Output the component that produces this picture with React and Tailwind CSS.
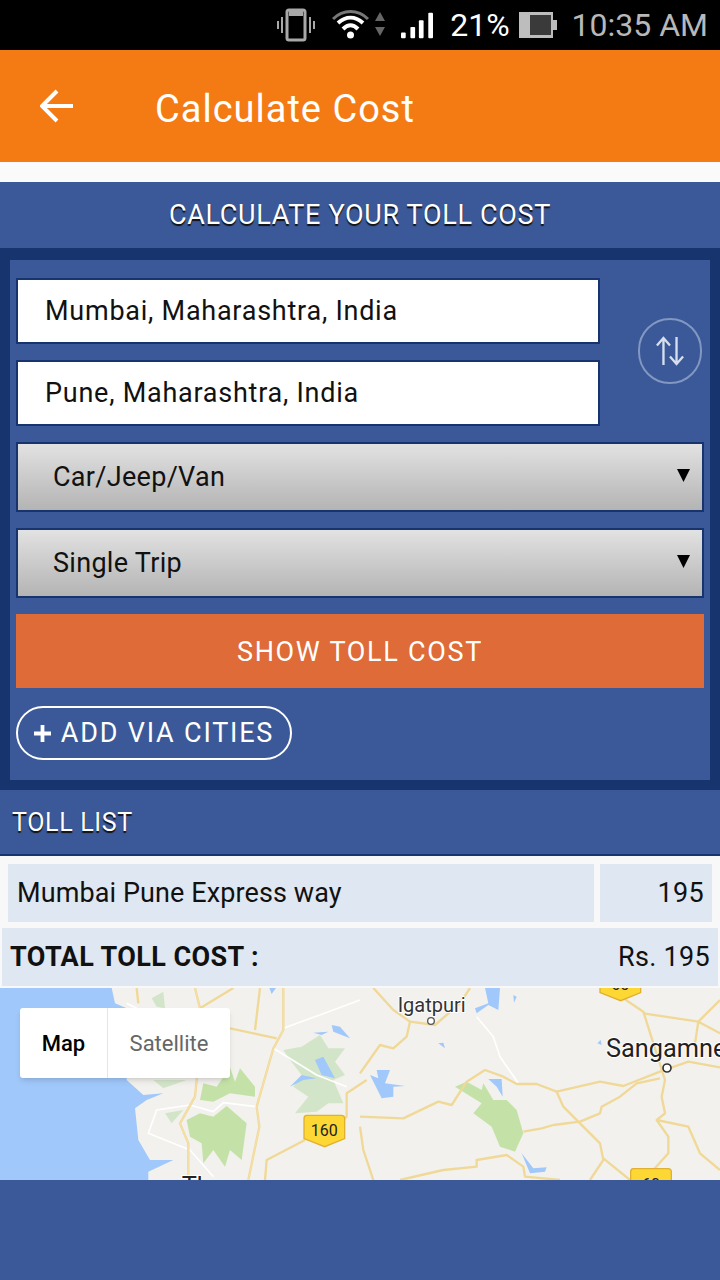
const ROADS_LEFT = [
  'M585 24 L600 85 L590 300 L585 350 L540 430 L565 490 L565 600',
  'M850 24 L850 150 L820 205 L770 380 L778 440 L745 600',
  'M410 24 L415 70',
  'M600 85 L700 24',
  'M780 24 L765 150',
  'M690 145 L830 175',
  'M1100 300 L1040 340 L1040 410 L1030 420',
  'M915 480 L800 540 L795 600',
];

const ROADS_RIGHT = [
  'M40 24 L100 90 L150 125 L225 135 L300 70 L330 24',
  'M150 125 L140 170 L100 205 L60 195 L0 280',
  'M0 410 L130 415 L235 365 L275 375 L320 305 L375 270 L430 290 L470 312 L530 312 L590 335 L720 305 L790 318 L900 275 L985 245 L1080 262',
  'M590 335 L610 380 L660 430 L720 490 L730 540 L690 600',
  'M490 455 L545 445 L580 435 L660 425 L720 400 L725 380 L780 350 L830 310 L900 295',
  'M790 55 L850 95 L915 300 L905 350 L915 400 L890 420 L925 470 L925 520 L880 570',
  'M850 100 L1015 125 L1080 60',
  'M1015 125 L1005 190',
  'M890 420 L985 440 L1020 520 L1080 570',
  'M120 600 L250 570 L350 560 L350 540 L440 525 L490 560 L495 590 L600 600',
  'M730 535 L810 600',
  'M1015 125 L1080 160',
  'M0 440 L10 510 L40 600',
];

const ShieldBadge = ({ x, y, label }) => (
  <g>
    <path
      d={`M${x + 8} ${y} H${x + 112} Q${x + 122} ${y} ${x + 122} ${y + 10} V${y + 70} L${x + 62} ${y + 94} L${x} ${y + 70} V${y + 10} Q${x} ${y} ${x + 8} ${y}Z`}
      fill="#fdd835"
      stroke="#e0b030"
      strokeWidth="4"
    />
    <text x={x + 61} y={y + 63} textAnchor="middle" fontSize="48" fontFamily="Roboto, sans-serif" fill="#222">
      {label}
    </text>
  </g>
);

const MapDrawing = () => (
  <svg viewBox="0 24 2160 576" className="block w-[720px] h-[192px]">
    <rect x="0" y="24" width="2160" height="576" fill="#f2f1ed" />
    <path d="M0 24 L335 24 L345 70 L380 85 L380 300 L430 345 L490 340 L440 360 L405 385 L415 480 L450 540 L520 540 L445 575 L445 600 L0 600Z" fill="#a0c8fa" />

    {/* parks */}
    <g fill="#d3e5c9">
      <path d="M850 210 L905 200 L960 165 L985 205 L1035 205 L1005 245 L1035 285 L1000 300 L1030 370 L985 370 L950 395 L885 400 L925 350 L880 320 L905 285 L870 240Z" />
      <path d="M455 55 L490 35 L495 85 L470 80Z" />
      <path d="M495 400 L550 390 L515 430Z" />
      <path d="M460 300 L560 300 L490 325Z" />
    </g>
    <g fill="#c4e2a8">
      <path d="M610 310 L650 320 L690 262 L705 305 L720 265 L765 320 L765 350 L690 340 L640 365 L600 360Z" />
      <path d="M560 420 L600 400 L640 410 L680 378 L740 430 L725 540 L690 510 L675 560 L640 510 L610 550 L605 490 L570 470Z" />
      <path d="M1365 320 L1400 305 L1445 330 L1450 310 L1480 360 L1520 360 L1550 390 L1570 460 L1545 515 L1500 500 L1475 440 L1420 400 L1445 370Z" />
    </g>

    {/* water */}
    <g fill="#a0c8fa">
      <path d="M945 240 L970 230 L1005 295 L965 285Z" />
      <path d="M995 135 L1020 140 L1050 175 L1000 155Z" />
      <path d="M940 158 L985 155 L965 165Z" />
      <path d="M870 320 L905 285 L950 295 L910 300Z" />
      <path d="M808 24 L828 24 L815 42Z" />
      <path d="M1110 285 L1135 295 L1130 270 L1170 270 L1155 310 L1215 318 L1180 320 L1180 350 L1145 355Z" />
      <path d="M1465 297 L1505 297 L1508 350 L1490 320Z" />
      <path d="M1565 520 L1600 565 L1640 562 L1635 575 L1590 580Z" />
      <path d="M1455 24 L1500 24 L1495 90 L1465 75 L1430 100 L1425 85 L1465 70Z" />
      <path d="M1540 45 L1550 50 L1542 68Z" />
      <path d="M1315 190 L1330 188 L1335 205Z" />
      <path d="M1792 190 L1802 180 L1805 195Z" />
    </g>

    {/* white roads */}
    <g fill="none" stroke="#ffffff" strokeWidth="5" strokeLinejoin="round">
      <path d="M850 145 L1000 90 L1080 60" />
      <path d="M820 205 L950 285 L1040 320" />
      <path d="M570 375 L640 395 L670 368 L770 380" />
      <path d="M570 375 L470 390 L445 460 L570 510 L640 590" />
      <path d="M380 70 L420 90" />
      <path d="M1430 110 L1480 170 L1500 230 L1555 310" />
    </g>

    {/* yellow roads */}
    <g fill="none" stroke="#f0d897" strokeWidth="7" strokeLinejoin="round">
      {ROADS_LEFT.map((d) => (
        <path key={d} d={d} />
      ))}
      <g transform="translate(1080 0)">
        {ROADS_RIGHT.map((d) => (
          <path key={d} d={d} />
        ))}
      </g>
    </g>
    <g fill="none" stroke="#f8e6b4" strokeWidth="2" strokeLinejoin="round">
      {ROADS_LEFT.slice(0, 2).map((d) => (
        <path key={d} d={d} />
      ))}
    </g>

    <ShieldBadge x={912} y={406} label="160" />
    <ShieldBadge x={1800} y={-32} label="60" />
    <ShieldBadge x={1892} y={566} label="60" />

    <circle cx="1293" cy="123" r="10" fill="#fff" stroke="#555" strokeWidth="4" />
    <circle cx="2001" cy="264" r="12" fill="#fff" stroke="#333" strokeWidth="5" />

    <g fontFamily="Roboto, sans-serif" fill="#333" stroke="#fff" strokeWidth="6" paintOrder="stroke">
      <text x="1193" y="96" fontSize="60">Igatpuri</text>
      <text x="1818" y="232" fontSize="76" fill="#222">Sangamner</text>
      <text x="545" y="645" fontSize="76" fill="#222">Thane</text>
    </g>
  </svg>
);

const StatusBar = () => (
  <div className="flex h-[50px] items-center justify-end bg-black pr-[12px] font-['Roboto',sans-serif]">
    {/* vibrate */}
    <svg width="38" height="34" viewBox="0 0 38 34" className="mr-[17px]" fill="none" stroke="#a8a8a8">
      <rect x="10" y="2" width="18" height="30" rx="2" strokeWidth="3" />
      <rect x="12" y="3" width="14" height="5" fill="#a8a8a8" stroke="none" />
      <path d="M5 9V25M1 13V21M33 9V25M37 13V21" strokeWidth="2" />
    </svg>
    {/* wifi */}
    <svg width="54" height="34" viewBox="0 0 54 34" className="mr-[15px]" fill="none">
      <path d="M1 11C11 1 26 1 36 11" stroke="#777" strokeWidth="3" />
      <path d="M6 15C14 8 23 8 31 15" stroke="#fff" strokeWidth="4" />
      <path d="M11 21C16 16 21 16 26 21" stroke="#fff" strokeWidth="4" />
      <circle cx="18.5" cy="27" r="3.5" fill="#fff" />
      <path d="M48 4L53 13H43Z M43 19H53L48 28Z" fill="#666" />
    </svg>
    {/* signal */}
    <svg width="32" height="30" viewBox="0 0 34 30" className="mr-[17px]" fill="#fff">
      <rect x="0" y="23" width="5" height="6" rx="1" />
      <rect x="10" y="17" width="5" height="12" rx="1" />
      <rect x="19" y="10" width="5" height="19" rx="1" />
      <rect x="29" y="2" width="5" height="27" rx="1" />
    </svg>
    <span className="mr-[9px] text-[32px] leading-none text-white">21%</span>
    {/* battery */}
    <svg width="38" height="26" viewBox="0 0 38 26" className="mr-[15px]">
      <rect x="0" y="0" width="34" height="26" fill="#bdbdbd" />
      <rect x="11" y="3" width="21" height="20" fill="#3a3a3a" />
      <rect x="34" y="8" width="4" height="10" fill="#bdbdbd" />
    </svg>
    <span className="text-[32px] leading-none text-[#b8b8b8]">10:35 AM</span>
  </div>
);

const FieldInput = ({ value }) => (
  <div className="flex h-[66px] w-[584px] items-center border-2 border-[#17346f] bg-white pl-[27px] text-[27px] tracking-[0.75px] text-[#111]">
    {value}
  </div>
);

const FieldSelect = ({ value }) => (
  <div className="relative flex h-[70px] items-center border-2 border-[#17346f] bg-gradient-to-b from-[#e2e2e2] to-[#b4b4b4] pl-[35px] text-[27px] tracking-[0.3px] text-[#111]">
    {value}
    <svg width="13" height="13" viewBox="0 0 13 13" className="absolute right-[12px] top-[25px]">
      <path d="M0 0H13L6.5 13Z" fill="#000" />
    </svg>
  </div>
);

const App = () => {
  return (
    <div className="flex h-[1280px] w-[720px] flex-col overflow-hidden bg-[#3b5998] font-['Roboto',sans-serif]">
      <StatusBar />

      <header className="flex h-[112px] items-center bg-[#f47b14] pl-[40px] text-white">
        <svg width="34" height="34" viewBox="0 0 34 34" fill="none" stroke="#fff" strokeWidth="4">
          <path d="M33 17H3M17 2L2 17L17 32" />
        </svg>
        <h1 className="ml-[81px] pt-[5px] text-[38px] leading-none tracking-[1px]">Calculate Cost</h1>
      </header>

      <div className="h-[20px] bg-[#fafafa]" />

      <div className="flex h-[66px] items-center justify-center text-[27px] tracking-[0.67px] text-white [text-shadow:0_2px_1px_#111]">
        CALCULATE YOUR TOLL COST
      </div>

      <section className="mx-0 border-x-[10px] border-t-[12px] border-b-[10px] border-[#17346f] px-[6px] pt-[18px] pb-[20px]">
        <div className="flex items-center justify-between">
          <div className="flex flex-col gap-[16px]">
            <FieldInput value="Mumbai, Maharashtra, India" />
            <FieldInput value="Pune, Maharashtra, India" />
          </div>
          <div className="mr-[2px] -mt-[2px] flex h-[66px] w-[64px] items-center justify-center rounded-full border-2 border-[#8298c2] text-white">
            <svg width="28" height="30" viewBox="0 0 30 32" fill="none" stroke="#d5dfee" strokeWidth="2.5">
              <path d="M8 31V3M1 10L8 2L15 10M22 1V29M15 22L22 30L29 22" />
            </svg>
          </div>
        </div>
        <div className="mt-[16px] flex flex-col gap-[16px]">
          <FieldSelect value="Car/Jeep/Van" />
          <FieldSelect value="Single Trip" />
        </div>
        <button className="mt-[16px] flex h-[74px] w-full items-center justify-center bg-[#de6b38] pt-[3px] text-[27px] tracking-[1.7px] text-white">
          SHOW TOLL COST
        </button>
        <button className="mt-[18px] flex h-[54px] w-[276px] items-center justify-center gap-[10px] rounded-full border-2 border-white text-[27px] tracking-[1.8px] text-white">
          <svg width="17" height="17" viewBox="0 0 18 18" fill="#fff">
            <path d="M7 0H11V7H18V11H11V18H7V11H0V7H7Z" />
          </svg>
          ADD VIA CITIES
        </button>
      </section>

      <div className="flex h-[66px] items-center border-b-2 border-[#17346f] pl-[12px] pt-[2px] text-[25px] tracking-[0.66px] text-white [text-shadow:0_2px_1px_#111]">
        TOLL LIST
      </div>

      <div className="bg-[#f8f8f8] pt-[8px] pb-[2px] text-[#111]">
        <div className="flex gap-[6px] px-[8px]">
          <div className="flex h-[58px] flex-1 items-center bg-[#dfe7f2] pl-[9px] text-[27px] tracking-[0.1px]">Mumbai Pune Express way</div>
          <div className="flex h-[58px] w-[112px] items-center justify-end bg-[#dfe7f2] pr-[8px] text-[27px] tracking-[0.3px]">195</div>
        </div>
        <div className="mx-[2px] mt-[6px] flex h-[58px] items-center justify-between bg-[#dfe7f2] px-[8px] text-[27px]">
          <span className="font-bold tracking-[0.4px]">TOTAL TOLL COST :</span>
          <span className="tracking-[0.3px]">Rs. 195</span>
        </div>
      </div>

      <div className="relative h-[192px] overflow-hidden">
        <MapDrawing />
        <div className="absolute left-[20px] top-[20px] flex h-[70px] w-[210px] items-center rounded-[3px] bg-white text-[22px] shadow-md">
          <div className="flex h-full w-[88px] items-center justify-center border-r border-[#e6e6e6] font-medium text-black">Map</div>
          <div className="flex h-full flex-1 items-center justify-center text-[#666]">Satellite</div>
        </div>
      </div>
    </div>
  );
};

export default App;
